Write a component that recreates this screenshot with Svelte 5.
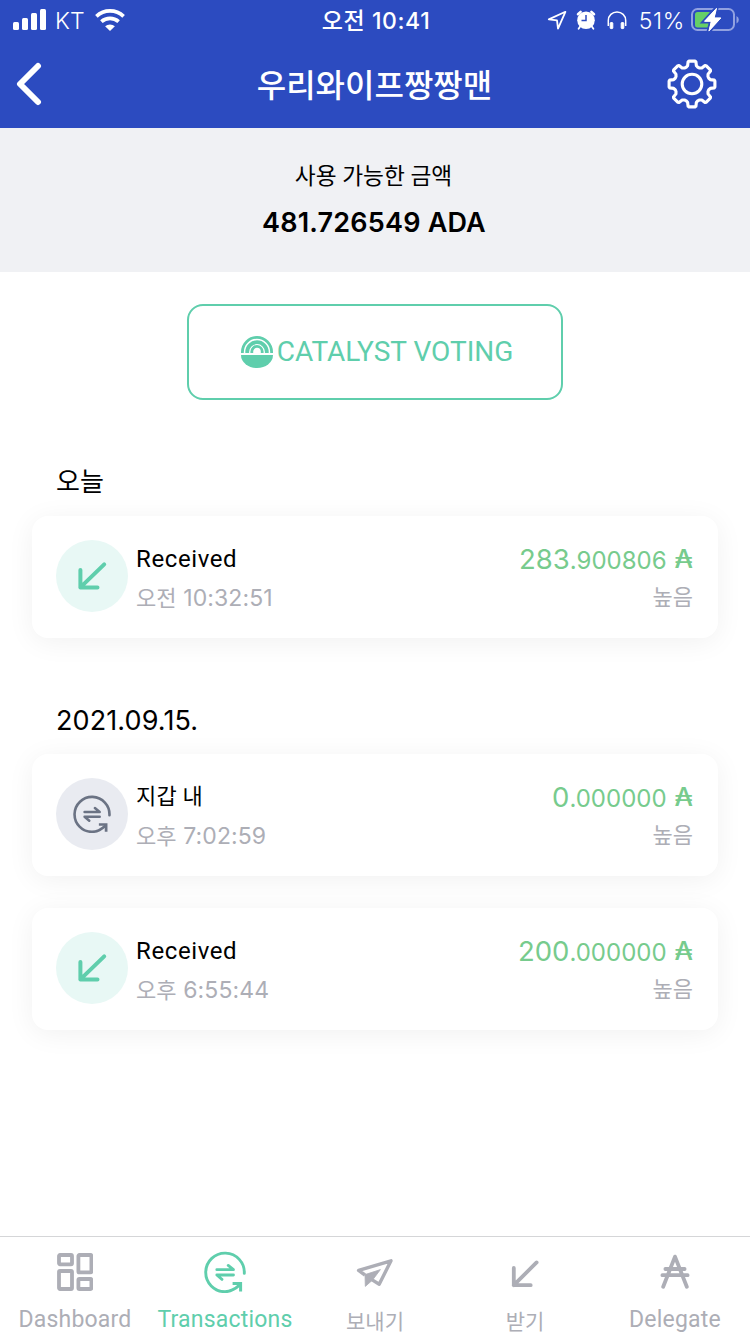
<script>
  const balance = '481.726549 ADA';

  const days = [
    {
      title: '오늘',
      items: [
        { type: 'received', label: 'Received', time: '오전 10:32:51', whole: '283', fraction: '.900806', assurance: '높음' }
      ]
    },
    {
      title: '2021.09.15.',
      items: [
        { type: 'intra', label: '지갑 내', time: '오후 7:02:59', whole: '0', fraction: '.000000', assurance: '높음' },
        { type: 'received', label: 'Received', time: '오후 6:55:44', whole: '200', fraction: '.000000', assurance: '높음' }
      ]
    }
  ];

  const tabs = [
    { id: 'dashboard', label: 'Dashboard' },
    { id: 'transactions', label: 'Transactions' },
    { id: 'send', label: '보내기' },
    { id: 'receive', label: '받기' },
    { id: 'delegate', label: 'Delegate' }
  ];

  let activeTab = $state('transactions');

  const hangul = /[가-힣]/;

  // one tooth of the settings gear, repeated eight times around the centre
  const tooth = [[16.6, -6], [18.3, -4.4], [22.3, -3.9], [22.9, -3], [22.9, 3], [22.3, 3.9], [18.3, 4.4], [16.6, 6]];
  let gear = '';
  for (let i = 0; i < 8; i++) {
    const a = (i * Math.PI) / 4;
    for (const [x, y] of tooth) {
      const px = 25 + x * Math.cos(a) - y * Math.sin(a);
      const py = 25 + x * Math.sin(a) + y * Math.cos(a);
      gear += `${gear ? 'L' : 'M'}${px.toFixed(2)} ${py.toFixed(2)}`;
    }
  }
  gear += 'Z';
</script>

{#snippet arrow(size)}
  <svg width={size} height={size} viewBox="0 0 36 36" fill="none" stroke="currentColor" stroke-width="4" stroke-linecap="round" stroke-linejoin="round">
    <path d="M30.2 6.4L6.4 29.4M6.4 12V29.4H23.5" />
  </svg>
{/snippet}

{#snippet exchange(size)}
  <svg width={size} height={size} viewBox="0 0 42 42" fill="none" stroke="currentColor" stroke-width="2.9" stroke-linecap="round">
    <path d="M40.3 22.4A19.3 19.3 0 1 0 21 40.7C27 40.7 31.5 37.8 35.5 34.2" />
    <path d="M28.6 32.6H36.6V40.6" stroke-width="3" stroke-linecap="butt" />
    <path d="M12.8 18.7H29.5L24.2 14.4M29.5 24H12.8L18 28.4" stroke-width="2.8" stroke-linejoin="round" />
  </svg>
{/snippet}

<div class="screen">
  <header>
    <div class="status">
      <div class="status-left">
        <svg width="34" height="22" viewBox="0 0 34 22" fill="#fff">
          <rect x="0" y="13" width="6" height="8" rx="1.5" />
          <rect x="9" y="9" width="6" height="12" rx="1.5" />
          <rect x="18" y="4" width="6" height="17" rx="1.5" />
          <rect x="27" y="0" width="6" height="21" rx="1.5" />
        </svg>
        <span class="carrier">KT</span>
        <svg class="wifi" width="30" height="22" viewBox="0 0 30 22" fill="none" stroke="#fff" stroke-width="3.8">
          <path d="M1.4 7.3A20 20 0 0 1 28.6 7.3" />
          <path d="M6.4 12.7A13 13 0 0 1 23.6 12.7" />
          <path d="M10.1 17.2A7.5 7.5 0 0 1 19.9 17.2L15 22Z" fill="#fff" stroke="none" />
        </svg>
      </div>
      <span class="clock">오전 10:41</span>
      <div class="status-right">
        <svg width="20" height="20" viewBox="0 0 20 20" fill="none" stroke="#fff" stroke-width="1.8" stroke-linejoin="round">
          <path d="M18.4 1.8L1.8 9.4L10 10.4L11 18.6Z" />
        </svg>
        <svg width="20" height="20" viewBox="0 0 20 20">
          <path d="M2 4.2L4.6 1.9M18 4.2L15.4 1.9" stroke="#fff" stroke-width="2.6" stroke-linecap="round" />
          <path d="M4.5 16L2.6 18.7M15.5 16L17.4 18.7" stroke="#fff" stroke-width="1.8" stroke-linecap="round" />
          <circle cx="10" cy="10.2" r="8.8" fill="#fff" />
          <path d="M10 5V10.5H5.5" fill="none" stroke="#2c4bc0" stroke-width="1.5" />
        </svg>
        <svg class="headphones" width="20" height="19" viewBox="0 0 20 19" fill="none" stroke="#fff">
          <path d="M1.3 15V9.4A8.7 8.5 0 0 1 18.7 9.4V15" stroke-width="1.5" />
          <rect x="3.2" y="11.6" width="2.6" height="6" rx="0.6" fill="#fff" />
          <rect x="14.2" y="11.6" width="2.6" height="6" rx="0.6" fill="#fff" />
        </svg>
        <span class="percent">51%</span>
        <svg width="48" height="24" viewBox="0 0 48 24">
          <rect x="1" y="1" width="42" height="21" rx="5.5" fill="none" stroke="#91a1e0" stroke-width="2" />
          <path d="M45.5 8V15.5Q47.8 14.5 47.8 11.75Q47.8 9 45.5 8Z" fill="#91a1e0" />
          <rect x="4" y="4" width="16" height="15.5" rx="2.5" fill="#66cf67" />
          <path d="M25.5 0L13.2 13.4H20L17.6 23.5L30.2 9.8H23.5Z" fill="#fff" stroke="#2c4bc0" stroke-width="4" paint-order="stroke" />
          <path d="M25.5 0.4L13.6 13.2H20.4L18 22.9L29.8 10H23Z" fill="#fff" stroke="#fff" stroke-linejoin="round" />
        </svg>
      </div>
    </div>
    <div class="nav">
      <button class="icon-button" aria-label="Back">
        <svg width="28" height="44" viewBox="0 0 28 44" fill="none" stroke="#fff" stroke-width="6" stroke-linecap="round" stroke-linejoin="round">
          <path d="M23 4L5 22L23 40" />
        </svg>
      </button>
      <h1>우리와이프짱짱맨</h1>
      <button class="icon-button" aria-label="Settings">
        <svg width="50" height="50" viewBox="0 0 50 50" fill="none" stroke="#fff" stroke-width="3.1" stroke-linejoin="round">
          <path d={gear} />
          <circle cx="25" cy="25" r="9.8" />
        </svg>
      </button>
    </div>
  </header>

  <section class="balance">
    <p class="caption">사용 가능한 금액</p>
    <p class="total">{balance}</p>
  </section>

  <main>
    <button class="voting">
      <svg width="32" height="32" viewBox="0 0 32 32">
        <g fill="none" stroke="#5fceac">
          <path d="M1.4 17V16A14.6 14.6 0 0 1 30.6 16V17" stroke-width="2.8" />
          <path d="M6.2 17V16A9.8 9.8 0 0 1 25.8 16V17" stroke-width="3.8" />
          <path d="M10.8 17V15.6A5.2 5.2 0 0 1 21.2 15.6V17" stroke-width="2.8" />
        </g>
        <path d="M0 19H32A16 13 0 0 1 0 19Z" fill="#5fceac" />
      </svg>
      <span>CATALYST VOTING</span>
    </button>

    {#each days as day}
      <section class="day">
        <h2 class:ko={hangul.test(day.title)}>{day.title}</h2>
        {#each day.items as tx}
          <article class="card">
            <div class="badge {tx.type}">
              {#if tx.type === 'received'}
                {@render arrow(36)}
              {:else}
                {@render exchange(38)}
              {/if}
            </div>
            <div class="info">
              <p class="label" class:ko={hangul.test(tx.label)}>{tx.label}</p>
              <p class="time"><span>{tx.time.split(' ')[0]}</span> {tx.time.split(' ')[1]}</p>
            </div>
            <div class="value">
              <p class="amount">
                <span class="whole">{tx.whole}</span><span class="fraction">{tx.fraction}</span><span class="symbol">₳</span>
              </p>
              <p class="assurance">{tx.assurance}</p>
            </div>
          </article>
        {/each}
      </section>
    {/each}
  </main>

  <nav class="tabs">
    {#each tabs as tab}
      <button class="tab" class:active={activeTab === tab.id} onclick={() => (activeTab = tab.id)}>
        <div class="tab-icon">
          {#if tab.id === 'dashboard'}
            <svg width="36" height="38" viewBox="0 0 36 38" fill="none" stroke="currentColor" stroke-width="3.8">
              <rect x="2" y="2" width="13" height="9.3" rx="1" />
              <rect x="21.4" y="2" width="13" height="17.4" rx="1" />
              <rect x="2" y="18" width="13" height="18" rx="1" />
              <rect x="21.4" y="26" width="13" height="10" rx="1" />
            </svg>
          {:else if tab.id === 'transactions'}
            {@render exchange(42)}
          {:else if tab.id === 'send'}
            <svg width="38" height="38" viewBox="0 0 38 38" fill="none" stroke="currentColor" stroke-width="3.4" stroke-linejoin="round">
              <path d="M9 22L2.6 17.4L35 7.8L23.2 31.2L15.8 26.6" />
              <path d="M9 21.6L24.4 16.6L16.6 27L9.3 33.4Z" fill="currentColor" stroke-width="0.8" />
            </svg>
          {:else if tab.id === 'receive'}
            <svg width="34" height="36" viewBox="0 0 34 36" fill="none" stroke="currentColor" stroke-width="3.8" stroke-linecap="round" stroke-linejoin="round">
              <path d="M28.6 8.4L5.8 31.2M5.8 14V31.2H22.7" />
            </svg>
          {:else}
            <svg width="30" height="36" viewBox="0 0 30 36" fill="none" stroke="currentColor" stroke-width="3.8" stroke-linecap="round" stroke-linejoin="round">
              <path d="M3.2 32.8L15 2.6L26.8 32.8M5.4 15H24.6M2.4 21.2H27.6" />
            </svg>
          {/if}
        </div>
        <span class:ko={hangul.test(tab.label)}>{tab.label}</span>
      </button>
    {/each}
  </nav>
</div>

<style>
  :global(body) {
    margin: 0;
    background: #fff;
  }

  .screen {
    width: 750px;
    height: 1334px;
    display: flex;
    flex-direction: column;
    overflow: hidden;
    color: #000;
    font-family: Roboto, "Noto Sans CJK KR", sans-serif;
  }

  p,
  h1,
  h2 {
    margin: 0;
    font-weight: 400;
    white-space: nowrap;
  }

  button {
    margin: 0;
    padding: 0;
    border: 0;
    background: none;
    font-family: inherit;
    color: inherit;
  }

  svg {
    display: block;
    flex: none;
  }

  header {
    height: 128px;
    flex: none;
    background: #2c4bc0;
    color: #fff;
  }

  .status {
    height: 40px;
    padding: 0 11px 0 13px;
    display: grid;
    grid-template-columns: 1fr auto 1fr;
    align-items: center;
    font-family: Inter, "Noto Sans CJK KR", sans-serif;
    font-size: 23px;
    line-height: 38px;
  }

  .status-left,
  .status-right {
    height: 40px;
    display: flex;
    align-items: center;
  }

  .carrier {
    margin: 0 10px 0 8px;
    padding-top: 2px;
    font-weight: 300;
  }

  .clock {
    padding-top: 2px;
    font-weight: 500;
    font-size: 23px;
    letter-spacing: 0.6px;
  }

  .status-right {
    justify-content: flex-end;
    gap: 9px;
  }

  .headphones {
    margin-left: 2px;
  }

  .percent {
    margin: 0 -3px 0 3px;
    padding-top: 2px;
    font-size: 23px;
    font-weight: 300;
    letter-spacing: 0.7px;
  }

  .nav {
    height: 88px;
    padding: 0 33px 0 15px;
    display: grid;
    grid-template-columns: 67px 1fr 50px;
    align-items: center;
  }

  h1 {
    padding-top: 3px;
    text-align: center;
    font-size: 32px;
    font-weight: 500;
    line-height: 48px;
  }

  .balance {
    height: 144px;
    flex: none;
    box-sizing: border-box;
    padding-top: 33px;
    background: #f0f1f4;
    text-align: center;
  }

  .caption {
    padding-right: 3px;
    font-size: 22.7px;
    line-height: 32px;
  }

  .total {
    padding: 14px 2px 0 0;
    font-family: Inter, sans-serif;
    font-size: 27px;
    font-weight: 600;
    line-height: 32px;
    letter-spacing: 0.2px;
  }

  main {
    flex: 1;
    padding: 32px 32px 0;
  }

  .voting {
    width: 376px;
    height: 96px;
    box-sizing: border-box;
    margin: 0 auto;
    padding: 0 0 1px 4px;
    display: flex;
    align-items: center;
    justify-content: center;
    gap: 4px;
    border: 2px solid #5fceac;
    border-radius: 16px;
    color: #5fceac;
    font-size: 28px;
  }

  .day {
    padding-top: 61px;
  }

  .day + .day {
    padding-top: 63px;
  }

  h2 {
    height: 40px;
    margin: 0 0 13px;
    padding-left: 24px;
    font-family: Inter, "Noto Sans CJK KR", sans-serif;
    font-size: 27px;
    line-height: 40px;
    letter-spacing: 0.1px;
  }

  h2.ko {
    margin-bottom: 15px;
    font-size: 26px;
    line-height: 41px;
  }

  .card {
    height: 122px;
    box-sizing: border-box;
    padding: 0 25px 0 24px;
    display: flex;
    align-items: center;
    border-radius: 16px;
    background: #fff;
    box-shadow: 0 4px 28px rgba(0, 0, 0, 0.06);
  }

  .card + .card {
    margin-top: 32px;
  }

  .badge {
    width: 72px;
    height: 72px;
    margin: -2px 8px 0 0;
    display: flex;
    align-items: center;
    justify-content: center;
    border-radius: 50%;
  }

  .info {
    flex: 1;
    padding-top: 2px;
  }

  .received {
    background: #e8f8f5;
    color: #5fceac;
  }

  .intra {
    background: #e9ebf1;
    color: #6b7384;
  }

  .label {
    font-size: 24px;
    line-height: 38px;
    letter-spacing: 0.6px;
  }

  .label.ko {
    letter-spacing: 0.2px;
  }

  .time {
    padding-top: 1px;
    font-family: Inter, "Noto Sans CJK KR", sans-serif;
    font-size: 23px;
    line-height: 38px;
    letter-spacing: 0.1px;
    color: #adaeb6;
  }

  .time span,
  .label.ko,
  .assurance {
    font-size: 22px;
  }

  .value {
    padding-top: 3px;
    text-align: right;
  }

  .amount {
    height: 38px;
    display: flex;
    align-items: center;
    justify-content: flex-end;
    font-family: Inter, sans-serif;
    color: #77cb8d;
  }

  .whole {
    font-size: 27.5px;
  }

  .fraction {
    padding-top: 3px;
    font-size: 24px;
  }

  .symbol {
    margin: -1px 0 0 8px;
    font-size: 26px;
    font-weight: 500;
  }

  .assurance {
    line-height: 39px;
    color: #adaeb6;
  }

  .tabs {
    height: 98px;
    flex: none;
    box-sizing: border-box;
    display: grid;
    grid-template-columns: repeat(5, 1fr);
    border-top: 1px solid #d5d6d8;
    background: #fff;
  }

  .tab {
    display: flex;
    flex-direction: column;
    align-items: center;
    color: #adaeb6;
    font-size: 23px;
    line-height: 32px;
    letter-spacing: 0.2px;
  }

  .tab.active {
    color: #5fceac;
  }

  .tab span {
    padding-top: 1px;
    white-space: nowrap;
  }

  .tab span.ko {
    padding-top: 3px;
    font-size: 21px;
    letter-spacing: 0;
  }

  .tab-icon {
    height: 66px;
    padding-top: 4px;
    box-sizing: border-box;
    display: flex;
    align-items: center;
  }
</style>
